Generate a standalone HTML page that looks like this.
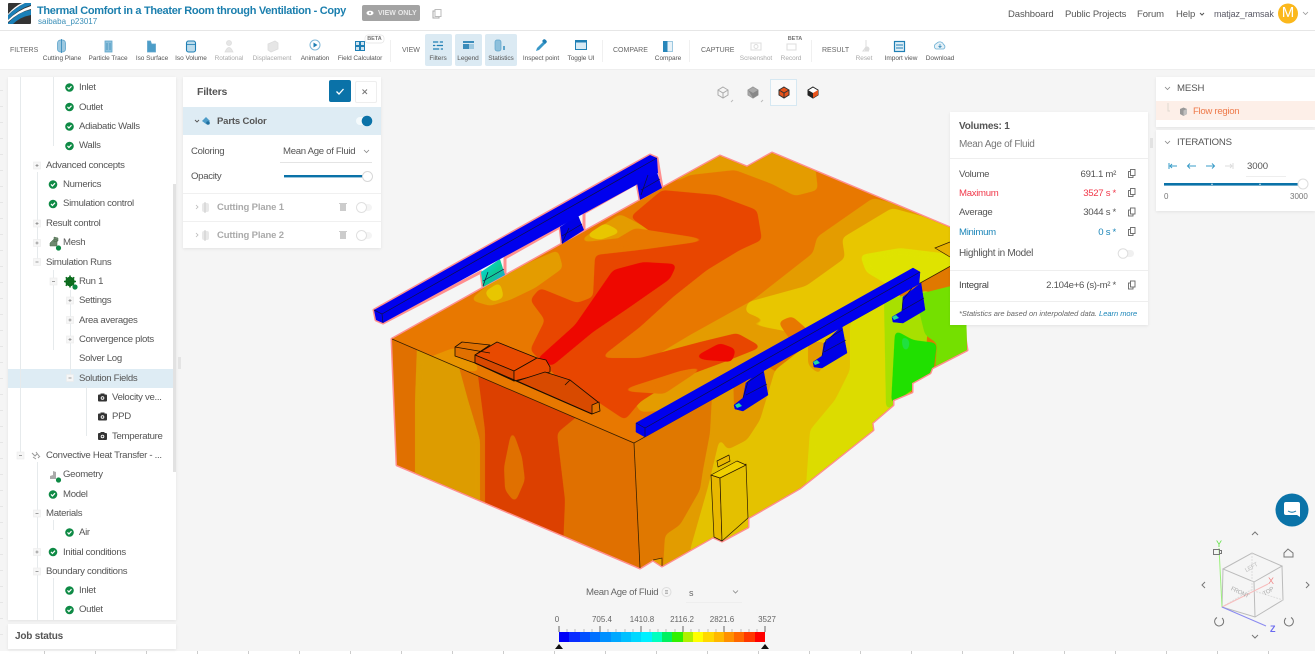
<!DOCTYPE html>
<html><head><meta charset="utf-8"><title>Thermal Comfort</title>
<style>
html,body{margin:0;padding:0;width:1315px;height:654px;overflow:hidden;background:#f5f5f5;font-family:"Liberation Sans",sans-serif;color:#555}
.a{position:absolute}
.t{position:absolute;white-space:nowrap;line-height:14px;font-size:9.6px;letter-spacing:-.3px;color:#555;margin-top:1px}
.c{transform:translateX(-50%)}
.r{transform:translateX(-100%)}
.l{font-size:6.5px;letter-spacing:-.05px;color:#555}
.g{font-size:7px;color:#666;letter-spacing:0}
.d{color:#aaa}
.p{position:absolute;background:#fff;box-shadow:0 1px 3px rgba(0,0,0,.08)}
svg{position:absolute;left:0;top:0;overflow:visible}
.f polygon{filter:url(#goo)}
</style></head><body>

<!-- 3D model -->
<svg width="1315" height="654" viewBox="0 0 1315 654">
<defs>
<filter id="goo" filterUnits="userSpaceOnUse" x="360" y="130" width="640" height="460" color-interpolation-filters="sRGB">
<feGaussianBlur stdDeviation="3"/>
<feColorMatrix type="matrix" values="1 0 0 0 0 0 1 0 0 0 0 0 1 0 0 0 0 0 12 -5.5"/>
</filter>
<clipPath id="top"><polygon points="392,339 680,178 720,156 747,167 772,153 965,234 965,258 634,443"/></clipPath>
<clipPath id="lw"><polygon points="392,339 634,443 640,568 397,465"/></clipPath>
<clipPath id="rw"><polygon points="634,443 965,258 967,350 932,368 930,373 912,383 912,392 893,400 893,405 872,423 873,430 800,488 748,518 748,527 722,541 713,537 662,566 653,560 640,568"/></clipPath>
<linearGradient id="cy" x1="0" y1="0" x2="1" y2="1"><stop offset="0" stop-color="#00d8f0"/><stop offset=".55" stop-color="#10c890"/><stop offset=".8" stop-color="#20a8d0"/><stop offset="1" stop-color="#0000e8"/></linearGradient>
</defs>
<!-- outline -->
<polygon fill="#e87800" stroke="#ff8f8f" stroke-width="3" stroke-linejoin="round" points="392,339 680,178 720,156 747,167 772,153 960,232 963,325 967,350 932,368 930,373 912,383 912,392 893,400 893,405 872,423 873,430 800,488 748,518 748,527 722,541 713,537 662,566 653,560 640,568 397,465"/>
<polygon fill="none" stroke="#ff8f8f" stroke-width="3" stroke-linejoin="round" points="374,310 650,155 657,158 662,188 640,200 637,183 584,213 584,230 562,244 560,227 505,258 505,275 483,287 481,272 383,323 376,320"/>

<!-- top face -->
<g clip-path="url(#top)"><g class="f">
<rect x="380" y="150" width="600" height="300" fill="#e87800"/>
<polygon fill="#e49c00" points="655,195 720,145 747,155 772,140 815,165 818,190 795,196 772,184 735,170 690,175"/>
<polygon fill="#e49c00" points="873,198 817,237 813,253 753,300 690,335 645,362 622,378 640,412 680,410 760,360 800,335 980,262 980,225"/>
<polygon fill="#e8c600" points="892,208 842,238 845,258 806,286 748,302 745,312 770,322 752,322 722,332 753,325 790,332 812,342 980,268 980,232"/>
<polygon fill="#dfe300" points="860,255 900,248 950,254 955,270 900,292 866,272"/>
<polygon fill="#e49c00" points="470,300 490,283 530,262 558,250 563,268 535,288 510,300 490,306"/>
<polygon fill="#e8c600" points="484,292 500,282 504,298 492,302"/>
<polygon fill="#e49c00" points="580,240 620,214 632,220 668,240 620,238 585,242"/>
<polygon fill="#e8c600" points="585,236 605,223 622,232 600,240"/>
<polygon fill="#e84600" points="530,300 540,288 577,303 593,297 595,255 640,250 665,242 630,217 662,190 717,195 757,210 762,240 740,250 707,270 673,297 640,327 600,358 640,358 700,342 737,333 762,347 727,361 673,381 640,402 625,420 595,400 560,380 530,350 545,320"/>
<polygon fill="#e87800" points="635,228 712,240 640,250 605,246"/>
<polygon fill="#e87800" points="618,391 680,371 706,366 664,394"/>
<polygon fill="#ee0800" points="536,360 575,325 613,270 643,262 677,264 670,279 627,309 593,332 552,366"/>
<polygon fill="#ee0800" points="694,357 720,343 736,349 732,362 705,360"/>
<polygon fill="#e87800" points="778,322 792,316 808,330 810,344 795,347"/>
<polygon fill="#e89400" points="417,362 453,348 470,352 480,372 440,368"/>
</g></g>

<!-- left wall -->
<g clip-path="url(#lw)"><g class="f">
<rect x="385" y="330" width="260" height="245" fill="#e07000"/>
<polygon fill="#dd9c00" points="417,345 453,345 468,400 480,440 480,520 415,490 415,400"/>
<polygon fill="#dc4000" points="476,360 585,410 557,433 565,500 563,550 485,520 485,430"/>
<polygon fill="#e07000" points="512,428 504,467 505,490 515,503 525,480 522,457"/>
</g></g>

<!-- right wall -->
<g clip-path="url(#rw)"><g class="f">
<rect x="630" y="250" width="340" height="330" fill="#e07800"/>
<polygon fill="#e29c00" points="712,395 710,433 703,470 700,490 680,525 665,535 662,585 700,585 760,440 790,380 740,350"/>
<polygon fill="#e4c200" points="775,370 760,420 747,440 727,450 720,437 708,487 690,550 700,590 820,510 880,420 860,300 820,335"/>
<polygon fill="#dcdc00" points="850,322 850,370 835,400 810,430 805,500 880,450 900,400 900,290"/>
<polygon fill="#a8e000" points="884,300 886,410 905,400 925,370 930,290"/>
<polygon fill="#20e000" points="895,330 913,340 937,343 933,375 891,405"/>
<polygon fill="#20e040" points="901,335 910,340 908,352 903,350"/>
<polygon fill="#74e000" points="915,295 975,280 975,355 935,372 937,343 925,335"/>
<polygon fill="#e07800" points="733,372 747,375 744,412 734,408"/>
<polygon fill="#e49c00" points="808,342 826,342 820,375 808,365"/>
</g></g>
<polyline fill="none" stroke="#3a2000" stroke-width=".8" points="392,339 634,443 965,258"/>
<line x1="634" y1="443" x2="640" y2="568" stroke="#3a2000" stroke-width=".8"/>
<polyline fill="#e8b000" stroke="#3a2000" stroke-width=".7" points="950,242 935,248 950,257"/>
<polyline fill="#e8a000" stroke="#3a2000" stroke-width=".7" points="653,560 662,558 662,566"/>

<!-- back beam -->
<polygon fill="#0000e6" points="640,200 637,183 657,172 662,188"/>
<polygon fill="#0000e6" points="562,244 560,227 578,215 584,230"/>
<polygon fill="url(#cy)" points="483,287 481,272 500,259 505,275"/>
<polygon fill="#0000ee" points="374,310 650,155 657,158 658,173 383,323 376,320"/>
<g fill="none" stroke="#101040" stroke-width=".7">
<polyline points="374,310 382,314 657,158"/><line x1="382" y1="314" x2="383" y2="323"/>
<polyline points="648,175 641,195"/><polyline points="641,190 660,179"/>
<polyline points="569,228 562,243"/><polyline points="562,236 582,224"/>
<polyline points="488,272 483,286"/><polyline points="483,281 504,269"/>
</g>

<!-- bench -->
<g stroke="#1a0d00" stroke-width=".8" stroke-linejoin="round">
<polygon fill="#e07000" points="455,347 462,342 490,345 475,355 475,363 455,356"/>
<polygon fill="#e84a00" points="497,342 537,358 514,371 475,355"/>
<polygon fill="#d84800" points="475,355 514,371 514,381 475,363"/>
<polygon fill="#e84a00" points="514,371 537,358 546,360 550,367 550,372 514,381"/>
<polygon fill="#d84a00" points="517,381 545,372 570,380 598,402 592,414"/>
<polygon fill="#e07000" points="592,405 599,402 600,411 592,414"/>
<line x1="475" y1="363" x2="592" y2="414" stroke-width="1.100"/>
<line x1="455" y1="347" x2="490" y2="353"/>
<line x1="570" y1="380" x2="565" y2="385"/>
</g>

<!-- front beam legs -->
<g fill="#0000e6" stroke="#0000e6" stroke-width=".5" stroke-linejoin="round">
<polygon points="903,297 921,283 925,310 903,323 893,322 892,317 902,311"/>
<polygon points="824,343 842,326 847,353 822,368 814,367 813,362 822,356"/>
<polygon points="746,383 763,368 768,395 743,411 735,409 734,405 743,398"/>
</g>
<g fill="none" stroke="#101040" stroke-width=".7">
<polyline points="912,288 903,300 902,311"/><line x1="903" y1="310" x2="924" y2="298"/>
<polyline points="842,330 826,340 822,356"/><line x1="824" y1="352" x2="846" y2="340"/>
<polyline points="763,372 748,382 743,398"/><line x1="746" y1="395" x2="767" y2="384"/>
</g>
<polygon fill="#20d8a0" points="892,317 896,315 899,318 894,320"/>
<polygon fill="#20d8a0" points="813,362 817,360 820,363 815,365"/>
<polygon fill="#20d8a0" points="735,405 739,403 742,406 737,408"/>
<!-- front beam -->
<polygon fill="#0000ee" stroke="#0000ee" stroke-width=".5" stroke-linejoin="round" points="636,423 913,268 920,272 919,284 645,437 636,432"/>
<g fill="none" stroke="#101040" stroke-width=".7"><polyline points="636,423 645,428 920,272"/><line x1="645" y1="428" x2="645" y2="437"/></g>

<!-- cabinet -->
<g stroke="#2a1800" stroke-width=".7" stroke-linejoin="round">
<polygon fill="#e8b800" points="711,475 720,478 722,541 714,537"/>
<polygon fill="#e4c000" points="720,478 746,464 748,518 722,541"/>
<polygon fill="#f0d000" points="711,475 737,461 746,465 720,478"/>
<polygon fill="#e8b800" points="717,461 729,455 730,461 718,467"/>
</g>

<!-- colour bar -->
<g shape-rendering="crispEdges">
<rect x="559" y="632" width="11" height="10" fill="#0000f8"/><rect x="569" y="632" width="11" height="10" fill="#0a2cff"/><rect x="580" y="632" width="11" height="10" fill="#0050ff"/><rect x="590" y="632" width="11" height="10" fill="#0070ff"/><rect x="600" y="632" width="11" height="10" fill="#0090ff"/><rect x="611" y="632" width="11" height="10" fill="#00a8ff"/><rect x="621" y="632" width="11" height="10" fill="#00c0ff"/><rect x="631" y="632" width="11" height="10" fill="#00d8ff"/><rect x="641" y="632" width="11" height="10" fill="#00f0ff"/><rect x="652" y="632" width="11" height="10" fill="#00ffc0"/><rect x="662" y="632" width="11" height="10" fill="#00f060"/><rect x="672" y="632" width="11" height="10" fill="#30f000"/><rect x="683" y="632" width="11" height="10" fill="#b0f000"/><rect x="693" y="632" width="11" height="10" fill="#ffff00"/><rect x="703" y="632" width="11" height="10" fill="#ffd800"/><rect x="714" y="632" width="11" height="10" fill="#ffb800"/><rect x="724" y="632" width="11" height="10" fill="#ff9000"/><rect x="734" y="632" width="11" height="10" fill="#ff6800"/><rect x="744" y="632" width="11" height="10" fill="#ff3800"/><rect x="755" y="632" width="10" height="10" fill="#ff0000"/>
</g>
<path d="M559 626v6M600 626v6M641 626v6M683 626v6M724 626v6M765 626v6" stroke="#444" stroke-width=".8"/>
<path d="M567 629v3M575 629v3M584 629v3M592 629v3M608 629v3M616 629v3M625 629v3M633 629v3M650 629v3M658 629v3M666 629v3M675 629v3M691 629v3M699 629v3M708 629v3M716 629v3M732 629v3M741 629v3M749 629v3M757 629v3" stroke="#999" stroke-width=".6"/>
<polygon points="555,649 559,644 563,649" fill="#111"/><polygon points="761,649 765,644 769,649" fill="#111"/>

<!-- view cubes -->
<rect x="770.500" y="79.500" width="26" height="26" fill="#fafafa" stroke="#d6e8f2"/>
<g stroke-width="1">
<path d="M723 87l5 3v5l-5 3-5-3v-5zM718 90l5 3 5-3M723 93v5" fill="none" stroke="#aaa"/>
<path d="M753 87l5 3v5l-5 3-5-3v-5z" fill="#aaa" stroke="#999"/><path d="M748 90l5 3 5-3v5l-5 3z" fill="#888"/>
<path d="M784 87l5 3v5l-5 3-5-3v-5z" fill="#e8541c" stroke="#333"/><path d="M779 90l5 3 5-3M784 93v5" fill="none" stroke="#333"/>
<path d="M813 87l5 3v5l-5 3-5-3v-5z" fill="#fff" stroke="#222"/><path d="M808 90l5 3v5l-5-3z" fill="#222"/><path d="M813 93l5-3v5l-5 3z" fill="#e8541c"/>
<path d="M733 100l-2 2M763 100l-2 2" stroke="#bbb"/>
</g>

<!-- nav cube -->
<g fill="none" stroke="#bbb" stroke-width="1">
<path d="M1223 569l29-16 30 13-28 16zM1223 569l-1 38 33 10 28-17-1-34M1254 582l1 35"/>
<path d="M1222 607l29-17 32 10M1252 553v37" stroke="#ddd" stroke-dasharray="2 1"/>
</g>
<line x1="1222" y1="607" x2="1219" y2="548" stroke="#9cf07c" stroke-width="1"/>
<line x1="1222" y1="607" x2="1268" y2="584" stroke="#f6bcbc" stroke-width="1"/>
<line x1="1222" y1="607" x2="1266" y2="626" stroke="#8a8af0" stroke-width="1"/>
<g fill="none" stroke="#777" stroke-width="1">
<path d="M1252 535l3-3 3 3M1252 635l3 3 3-3M1205 582l-3 3 3 3M1306 582l3 3-3 3"/>
<path d="M1284 553l4-4 5 4v4h-9z"/>
<rect x="1213.500" y="549.500" width="6" height="5"/><rect x="1219.500" y="550.500" width="2" height="3"/>
<path d="M1222 618a4.500 4.500 0 1 1-5-.5M1286 618a4.500 4.500 0 1 0 5-.5"/>
</g>

<!-- chat -->
<circle cx="1292" cy="510" r="16.500" fill="#0a73a8"/>
<path d="M1286 502h12a2 2 0 0 1 2 2v13l-3-2h-11a2 2 0 0 1-2-2v-9a2 2 0 0 1 2-2z" fill="#fff"/>
<path d="M1288 511q4 2.500 8 0" fill="none" stroke="#0a73a8" stroke-width="1"/>
</svg>

<div class="t" style="left:1216px;top:536px;color:#5ee040;font-size:9px">Y</div>
<div class="t" style="left:1268px;top:573px;color:#f08a8a;font-size:9px">X</div>
<div class="t" style="left:1270px;top:621px;color:#6a6af0;font-size:9px;font-weight:bold">Z</div>
<div class="t" style="left:1230px;top:585px;color:#aaa;font-size:6px;transform:rotate(25deg)">FRONT</div>
<div class="t" style="left:1263px;top:584px;color:#aaa;font-size:6px;transform:rotate(-30deg)">TOP</div>
<div class="t" style="left:1245px;top:560px;color:#bbb;font-size:6px;transform:rotate(-30deg)">LEFT</div>

<!-- rulers -->
<svg width="1315" height="654" viewBox="0 0 1315 654">
<rect x="0" y="651" width="1315" height="3" fill="#fff"/>
<path d="M44.500 651v3M95.500 651v3M146.500 651v3M197.500 651v3M248.500 651v3M299.500 651v3M350.500 651v3M401.500 651v3M452.500 651v3M503.500 651v3M554.500 651v3M605.500 651v3M656.500 651v3M707.500 651v3M758.500 651v3M809.500 651v3M860.500 651v3M911.500 651v3M962.500 651v3M1013.500 651v3M1064.500 651v3M1115.500 651v3M1166.500 651v3M1217.500 651v3M1268.500 651v3" stroke="#ccc"/>
<path d="M0 90.500h3M0 106.500h3M0 122.500h3M0 138.500h3M0 154.500h3M0 170.500h3M0 186.500h3M0 202.500h3M0 218.500h3M0 234.500h3M0 250.500h3M0 266.500h3M0 282.500h3M0 298.500h3M0 314.500h3M0 330.500h3M0 346.500h3M0 362.500h3M0 378.500h3M0 394.500h3M0 410.500h3M0 426.500h3M0 442.500h3M0 458.500h3M0 474.500h3M0 490.500h3M0 506.500h3M0 522.500h3M0 538.500h3M0 554.500h3M0 570.500h3M0 586.500h3M0 602.500h3M0 618.500h3M0 634.500h3" stroke="#e6e6e6"/>
</svg>

<!-- Header -->
<div class="a" style="left:0;top:0;width:1315px;height:30px;background:#fff;border-bottom:1px solid #e6e6e6"></div>
<svg width="40" height="30" viewBox="0 0 40 30">
<rect x="8" y="3" width="23" height="21" rx="1" fill="#333"/>
<path d="M8 15Q18 6 25 3h6v2Q18 9 8 20z" fill="#1a80b8"/>
<path d="M8 23Q20 11 31 10v5Q20 17 13 24H8z" fill="#1a80b8"/>
<path d="M8 14Q15 6 22 3h3Q16 7 8 15zM8 20Q18 10 31 6v3Q19 12 8 22z" fill="#fff"/>
</svg>
<div class="t" style="left:37px;top:3px;font-size:11px;font-weight:bold;color:#1b7fae;letter-spacing:-.32px">Thermal Comfort in a Theater Room through Ventilation - Copy</div>
<div class="t" style="left:38px;top:14px;font-size:8px;color:#3a8fb8;letter-spacing:0">saibaba_p23017</div>
<div class="a" style="left:362px;top:5px;width:58px;height:16px;background:#a3a3a3;border-radius:2px"></div>
<svg width="430" height="30" viewBox="0 0 430 30"><ellipse cx="370" cy="13" rx="3.500" ry="2.300" fill="#fff"/><circle cx="370" cy="13" r="1" fill="#a3a3a3"/>
<rect x="433" y="11" width="6" height="7" fill="none" stroke="#aaa"/><rect x="435" y="9.500" width="6" height="7" fill="#fff" stroke="#bbb"/></svg>
<div class="t" style="left:378px;top:6px;font-size:7px;font-weight:bold;color:#e8e8e8;letter-spacing:0">VIEW ONLY</div>
<div class="t" style="left:1008px;top:7px;font-size:9.500px;letter-spacing:-.1px">Dashboard</div>
<div class="t" style="left:1065px;top:7px;font-size:9.500px;letter-spacing:-.1px">Public Projects</div>
<div class="t" style="left:1137px;top:7px;font-size:9.500px;letter-spacing:-.1px">Forum</div>
<div class="t" style="left:1176px;top:7px;font-size:9.500px;letter-spacing:-.1px">Help</div>
<div class="t" style="left:1214px;top:6px;font-size:9px;letter-spacing:-.1px;color:#5a5a66">matjaz_ramsak</div>
<svg width="1315" height="30" viewBox="0 0 1315 30">
<path d="M1200 13l2 2 2-2" fill="none" stroke="#555" stroke-width="1"/>
<circle cx="1288" cy="13.500" r="10" fill="#fbb81c"/>
<path d="M1303 12l2.500 2.500 2.500-2.500" fill="none" stroke="#999" stroke-width=".8"/>
</svg>
<div class="t" style="left:1288px;top:5px;font-size:15px;color:#fff;letter-spacing:0;transform:translateX(-50%)">M</div>

<!-- Toolbar -->
<div class="a" style="left:0;top:31px;width:1315px;height:38px;background:#fff;border-bottom:1px solid #eee"></div>
<div class="a" style="left:425px;top:34px;width:27px;height:32px;background:#dbeaf3;border-radius:2px"></div>
<div class="a" style="left:455px;top:34px;width:27px;height:32px;background:#dbeaf3;border-radius:2px"></div>
<div class="a" style="left:485px;top:34px;width:32px;height:32px;background:#dbeaf3;border-radius:2px"></div>
<svg width="1315" height="70" viewBox="0 0 1315 70">
<path d="M390.500 40v22M602.500 40v22M689.500 40v22M811.500 40v22" stroke="#f0f0f0"/>
<g fill="#9cc8e0" stroke="#5fa5cb" stroke-width=".8">
<rect x="57.500" y="40" width="8" height="12" rx="3"/><path d="M61.500 39v14" stroke="#2e86b8"/>
<rect x="105" y="41" width="7" height="11" fill="#8dc0dc"/><path d="M107 43v7M110 43v7" stroke="#3a8cba"/>
<path d="M147.500 41h3l1 3h4v8h-8z" fill="#4c9dc8"/>
<rect x="186.500" y="41" width="9" height="11" rx="2" fill="#bcdcec" stroke="#1f7fb4" stroke-width="1.100"/><path d="M186.500 44.500h9" stroke="#1f7fb4"/>
</g>
<g fill="#e6e6e6" stroke="#ddd" stroke-width=".8"><path d="M225 52q4-9 8 0z"/><circle cx="229" cy="43" r="2.500"/><path d="M268 44l7-3 3 2v6l-7 3-3-2z"/></g>
<circle cx="315" cy="45" r="5" fill="#fff" stroke="#7fb8d8"/><path d="M313.500 42.500l4 2.500-4 2.500z" fill="#1f7fb4"/>
<g fill="#cfe4f0" stroke="#1f7fb4" stroke-width="1"><rect x="355.500" y="41.500" width="4" height="4"/><rect x="360.500" y="41.500" width="4" height="4"/><rect x="355.500" y="46.500" width="4" height="4"/><rect x="360.500" y="46.500" width="4" height="4"/></g>
<rect x="365" y="35" width="19" height="8" rx="3" fill="#fff" stroke="#e4e4e4" stroke-width=".7"/>
<g stroke="#1f7fb4" stroke-width="1.200" fill="none"><path d="M433 42h10M433 45.500h10M433 49h10"/></g>
<g stroke="#fff" stroke-width="1.200"><path d="M439 41v2M436 44.500v2M440 48v2"/></g>
<path d="M463 41h11v2h-11z" fill="#3a8cba"/><rect x="463" y="44" width="11" height="5" fill="#3a8cba"/><rect x="469" y="44" width="5" height="5" fill="#9cc8e0"/>
<rect x="495" y="40" width="6" height="11" rx="2" fill="#8dc0dc" stroke="#5fa5cb" stroke-width=".7"/><path d="M503 46h2v4h-2z" fill="#5fa5cb"/>
<path d="M536 51l1-3 7-7 2 2-7 7z" fill="#3a98c8"/><path d="M542 41l2-2 2 1 1 2-2 2z" fill="#1f7fb4"/>
<rect x="575.500" y="40.500" width="11" height="9" fill="#d8eaf4" stroke="#1f7fb4"/><rect x="575" y="40" width="12" height="2.500" fill="#1f7fb4"/>
<rect x="663.500" y="41.500" width="9" height="10" fill="#e8f2f8" stroke="#9cc8e0"/><rect x="663" y="41" width="4.500" height="11" fill="#2886ba"/>
<g fill="none" stroke="#ddd"><rect x="751" y="43" width="10" height="7"/><circle cx="756" cy="46.500" r="2"/><rect x="787" y="44" width="9" height="6"/><path d="M866 40v7l-3 4h6"/></g>
<circle cx="867" cy="49" r="2.500" fill="#ddd"/>
<rect x="894.500" y="41.500" width="10" height="10" fill="#e0eff7" stroke="#1f7fb4" stroke-width="1.200"/><path d="M896 45h7M896 48h7" stroke="#1f7fb4"/>
<path d="M936 49a3 3 0 0 1 .5-5.500 4 4 0 0 1 7 1 2.500 2.500 0 0 1 0 4.500z" fill="#e6f1f7" stroke="#6cb0d4" stroke-width=".8"/><path d="M940 44v3M938.500 46l1.500 1.500 1.500-1.500" fill="none" stroke="#1f7fb4" stroke-width=".7"/>
</svg>
<div class="t g" style="left:10px;top:43px">FILTERS</div>
<div class="t g" style="left:402px;top:43px">VIEW</div>
<div class="t g" style="left:613px;top:43px">COMPARE</div>
<div class="t g" style="left:701px;top:43px">CAPTURE</div>
<div class="t g" style="left:822px;top:43px">RESULT</div>
<div class="t l c" style="left:62px;top:51px">Cutting Plane</div>
<div class="t l c" style="left:108px;top:51px">Particle Trace</div>
<div class="t l c" style="left:152px;top:51px">Iso Surface</div>
<div class="t l c" style="left:191px;top:51px">Iso Volume</div>
<div class="t l c d" style="left:229px;top:51px">Rotational</div>
<div class="t l c d" style="left:272px;top:51px">Displacement</div>
<div class="t l c" style="left:315px;top:51px">Animation</div>
<div class="t l c" style="left:360px;top:51px">Field Calculator</div>
<div class="t c" style="left:374.500px;top:31px;font-size:5.500px;font-weight:bold;color:#777;letter-spacing:0">BETA</div>
<div class="t l c" style="left:438px;top:51px">Filters</div>
<div class="t l c" style="left:468px;top:51px">Legend</div>
<div class="t l c" style="left:501px;top:51px">Statistics</div>
<div class="t l c" style="left:541px;top:51px">Inspect point</div>
<div class="t l c" style="left:581px;top:51px">Toggle UI</div>
<div class="t l c" style="left:668px;top:51px">Compare</div>
<div class="t l c d" style="left:756px;top:51px">Screenshot</div>
<div class="t l c d" style="left:791px;top:51px">Record</div>
<div class="t c" style="left:795px;top:31px;font-size:5.500px;font-weight:bold;color:#777;letter-spacing:0">BETA</div>
<div class="t l c d" style="left:864px;top:51px">Reset</div>
<div class="t l c" style="left:901px;top:51px">Import view</div>
<div class="t l c" style="left:940px;top:51px">Download</div>

<!-- Tree panel -->
<div class="p" style="left:8px;top:77px;width:168px;height:543px"></div>
<div class="a" style="left:8px;top:369px;width:165px;height:19px;background:#deecf4"></div>
<div class="a" style="left:173px;top:184px;width:3px;height:288px;background:#e2e2e2"></div>
<div class="a" style="left:178px;top:357px;width:3px;height:12px;background:#e4e4e4"></div>
<svg width="200" height="654" viewBox="0 0 200 654">
<defs><g id="ck"><circle r="4.300" fill="#0e8a45"/><path d="M-2-.1L-.6 1.500 2-1.300" fill="none" stroke="#fff" stroke-width="1.200"/></g>
<g id="mi"><rect x="-3.500" y="-3.500" width="7" height="7" fill="#f6f6f6" stroke="#ececec" stroke-width=".6"/><path d="M-1.500 0h3" stroke="#888" stroke-width=".8"/></g>
<g id="pl"><rect x="-3.500" y="-3.500" width="7" height="7" fill="#f6f6f6" stroke="#ececec" stroke-width=".6"/><path d="M-1.500 0h3M0-1.500v3" stroke="#888" stroke-width=".8"/></g>
<g id="cam"><rect x="-4.500" y="-3" width="9" height="7" rx="1" fill="#333"/><rect x="-2" y="-4" width="4" height="2" fill="#333"/><circle cy=".5" r="1.800" fill="#fff"/><circle cy=".5" r=".9" fill="#333"/></g></defs>
<path d="M20.500 77V452M37.500 172V262M37.500 462V620M53.500 77V146M53.500 270V350M70.500 290V378M86.500 386V436M53.500 520V530M53.500 578V620" stroke="#e6eaec" stroke-width="1" fill="none"/>
<use href="#ck" x="69.500" y="87.500"/><use href="#ck" x="69.500" y="107"/><use href="#ck" x="69.500" y="126.500"/><use href="#ck" x="69.500" y="146"/>
<use href="#pl" x="37" y="165.500"/><use href="#ck" x="53" y="184.500"/><use href="#ck" x="53" y="204"/>
<use href="#pl" x="37" y="223.500"/><use href="#pl" x="37" y="243"/><use href="#mi" x="37" y="262"/>
<use href="#mi" x="53.500" y="281.500"/><use href="#pl" x="70" y="300.500"/><use href="#pl" x="70" y="320"/><use href="#pl" x="70" y="339.500"/><use href="#mi" x="70" y="378"/>
<use href="#cam" x="102.500" y="397.500"/><use href="#cam" x="102.500" y="416.500"/><use href="#cam" x="102.500" y="436"/>
<use href="#mi" x="20.500" y="455.500"/>
<use href="#ck" x="53" y="494.500"/><use href="#mi" x="37" y="513.500"/><use href="#ck" x="69.500" y="532.500"/><use href="#pl" x="37" y="552"/><use href="#ck" x="53" y="552"/><use href="#mi" x="37" y="571.500"/><use href="#ck" x="69.500" y="590.500"/><use href="#ck" x="69.500" y="610"/>
<!-- mesh icon -->
<path d="M50 243l4-4 3 1v6h-7zM54 237l4 1v3l-4 1z" fill="#6f8a70" stroke="#4a6a4a" stroke-width=".5"/><circle cx="58.500" cy="248" r="2.600" fill="#0e8a45"/>
<!-- gear -->
<circle cx="70" cy="281.500" r="3.500" fill="none" stroke="#0b6b1d" stroke-width="2.400"/><path d="M70 275.500v12M64 281.500h12M65.800 277.300l8.400 8.400M74.200 277.300l-8.400 8.400" stroke="#0b6b1d" stroke-width="1.600"/><circle cx="75" cy="287" r="2.600" fill="#0e8a45"/>
<!-- convective -->
<path d="M32 453l3 3 2-2M36 452l3 4M33 457l3 2M38 458l2-2" stroke="#999" stroke-width="1" fill="none"/>
<!-- geometry -->
<path d="M50 476l3-1v4h-3zM53 471l3 1v7h-3z" fill="#aaa"/><circle cx="58.500" cy="480" r="2.600" fill="#0e8a45"/>
</svg>
<div class="t" style="left:79px;top:80px">Inlet</div>
<div class="t" style="left:79px;top:100px">Outlet</div>
<div class="t" style="left:79px;top:119px">Adiabatic Walls</div>
<div class="t" style="left:79px;top:138px">Walls</div>
<div class="t" style="left:46px;top:158px">Advanced concepts</div>
<div class="t" style="left:63px;top:177px">Numerics</div>
<div class="t" style="left:63px;top:196px">Simulation control</div>
<div class="t" style="left:46px;top:216px">Result control</div>
<div class="t" style="left:63px;top:235px">Mesh</div>
<div class="t" style="left:46px;top:255px">Simulation Runs</div>
<div class="t" style="left:79px;top:274px">Run 1</div>
<div class="t" style="left:79px;top:293px">Settings</div>
<div class="t" style="left:79px;top:313px">Area averages</div>
<div class="t" style="left:79px;top:332px">Convergence plots</div>
<div class="t" style="left:79px;top:351px">Solver Log</div>
<div class="t" style="left:79px;top:371px">Solution Fields</div>
<div class="t" style="left:112px;top:390px">Velocity ve...</div>
<div class="t" style="left:112px;top:409px">PPD</div>
<div class="t" style="left:112px;top:429px">Temperature</div>
<div class="t" style="left:46px;top:448px">Convective Heat Transfer - ...</div>
<div class="t" style="left:63px;top:467px">Geometry</div>
<div class="t" style="left:63px;top:487px">Model</div>
<div class="t" style="left:46px;top:506px">Materials</div>
<div class="t" style="left:79px;top:525px">Air</div>
<div class="t" style="left:63px;top:545px">Initial conditions</div>
<div class="t" style="left:46px;top:564px">Boundary conditions</div>
<div class="t" style="left:79px;top:583px">Inlet</div>
<div class="t" style="left:79px;top:602px">Outlet</div>
<div class="p" style="left:8px;top:624px;width:168px;height:25px"></div>
<div class="t" style="left:15px;top:629px;font-size:10px;font-weight:bold;color:#555;letter-spacing:-.2px">Job status</div>

<!-- Filters panel -->
<div class="p" style="left:183px;top:77px;width:198px;height:171px"></div>
<div class="a" style="left:183px;top:107px;width:198px;height:28px;background:#deecf4"></div>
<div class="a" style="left:329px;top:80px;width:22px;height:22px;background:#0a72a8;border-radius:2px"></div>
<div class="a" style="left:355px;top:81px;width:20px;height:20px;background:#fff;border:1px solid #eee;border-radius:2px"></div>
<div class="a" style="left:280px;top:162px;width:92px;height:1px;background:#e4e4e4"></div>
<div class="a" style="left:183px;top:193px;width:198px;height:1px;background:#f0f0f0"></div>
<div class="a" style="left:183px;top:221px;width:198px;height:1px;background:#f0f0f0"></div>
<svg width="400" height="260" viewBox="0 0 400 260">
<path d="M336.500 91.500l2.500 2.500 4.500-5" fill="none" stroke="#fff" stroke-width="1.300"/>
<path d="M362.500 89.500l4.500 4.500M367 89.500l-4.500 4.500" stroke="#777" stroke-width="1"/>
<path d="M195 120l2 2 2-2" fill="none" stroke="#555" stroke-width=".9"/>
<path d="M202 121l4-4 4 4-4 3z" fill="#4d9cc8"/><circle cx="208" cy="123" r="1.800" fill="#1f6f9f"/>
<rect x="356" y="117" width="15" height="8" rx="4" fill="#f4fafc"/><circle cx="367" cy="121" r="5.300" fill="#0a72a8"/>
<path d="M364 150l2.500 2.500 2.500-2.500" fill="none" stroke="#888" stroke-width=".8"/>
<rect x="284" y="175" width="80" height="2.400" fill="#0a72a8"/><circle cx="367.500" cy="176.500" r="5" fill="#fff" stroke="#d8d8d8"/>
<path d="M196 205l2 2-2 2M196 233l2 2-2 2" fill="none" stroke="#bbb" stroke-width=".8"/>
<rect x="202" y="203" width="7" height="9" rx="2" fill="#e8e8e8"/><path d="M205 202v11" stroke="#ccc"/><rect x="202" y="231" width="7" height="9" rx="2" fill="#e8e8e8"/><path d="M205 230v11" stroke="#ccc"/>
<g fill="#ccc"><rect x="340" y="204" width="6" height="7"/><rect x="339" y="203" width="8" height="1"/><rect x="340" y="232" width="6" height="7"/><rect x="339" y="231" width="8" height="1"/></g>
<rect x="358" y="204" width="14" height="7" rx="3.500" fill="#f4f4f4"/><circle cx="361.500" cy="207.500" r="5" fill="#fff" stroke="#e0e0e0"/>
<rect x="358" y="232" width="14" height="7" rx="3.500" fill="#f4f4f4"/><circle cx="361.500" cy="235.500" r="5" fill="#fff" stroke="#e0e0e0"/>
</svg>
<div class="t" style="left:197px;top:84px;font-size:10.500px;font-weight:bold;letter-spacing:-.2px">Filters</div>
<div class="t" style="left:217px;top:114px;font-size:9.500px;font-weight:bold;letter-spacing:-.15px">Parts Color</div>
<div class="t" style="left:191px;top:144px">Coloring</div>
<div class="t" style="left:283px;top:144px">Mean Age of Fluid</div>
<div class="t" style="left:191px;top:169px">Opacity</div>
<div class="t" style="left:217px;top:200px;font-size:9.500px;font-weight:bold;letter-spacing:-.15px;color:#aaa">Cutting Plane 1</div>
<div class="t" style="left:217px;top:228px;font-size:9.500px;font-weight:bold;letter-spacing:-.15px;color:#aaa">Cutting Plane 2</div>

<!-- Statistics panel -->
<div class="p" style="left:950px;top:112px;width:198px;height:213px"></div>
<div class="a" style="left:950px;top:158px;width:198px;height:1px;background:#eee"></div>
<div class="a" style="left:950px;top:270px;width:198px;height:1px;background:#eee"></div>
<div class="a" style="left:950px;top:301px;width:198px;height:1px;background:#eee"></div>
<div class="a" style="left:1150px;top:138px;width:3px;height:10px;background:#e2e2e2"></div>
<div class="t" style="left:959px;top:119px;font-size:10px;font-weight:bold;letter-spacing:-.2px">Volumes: 1</div>
<div class="t" style="left:959px;top:137px;color:#777;font-size:10px">Mean Age of Fluid</div>
<div class="t" style="left:959px;top:167px">Volume</div>
<div class="t" style="left:959px;top:186px;color:#f0384a">Maximum</div>
<div class="t" style="left:959px;top:205px">Average</div>
<div class="t" style="left:959px;top:225px;color:#1a85b8">Minimum</div>
<div class="t" style="left:959px;top:246px;font-size:10px">Highlight in Model</div>
<div class="t" style="left:959px;top:278px;color:#444">Integral</div>
<div class="t r" style="left:1116px;top:167px">691.1 m²</div>
<div class="t r" style="left:1116px;top:186px;color:#f0384a">3527 s *</div>
<div class="t r" style="left:1116px;top:205px">3044 s *</div>
<div class="t r" style="left:1116px;top:225px;color:#1a85b8">0 s *</div>
<div class="t r" style="left:1116px;top:278px">2.104e+6 (s)-m² *</div>
<div class="t" style="left:959px;top:306px;font-size:7.500px;font-style:italic;color:#666;letter-spacing:-.02px">*Statistics are based on interpolated data. <span style="color:#1a85b8">Learn more</span></div>
<svg width="1315" height="330" viewBox="0 0 1315 330">
<g fill="#fff" stroke="#666" stroke-width=".9">
<rect x="1128.500" y="171.500" width="4.500" height="6"/><rect x="1130.500" y="169.500" width="4.500" height="6"/>
<rect x="1128.500" y="190.500" width="4.500" height="6"/><rect x="1130.500" y="188.500" width="4.500" height="6"/>
<rect x="1128.500" y="210" width="4.500" height="6"/><rect x="1130.500" y="208" width="4.500" height="6"/>
<rect x="1128.500" y="229.500" width="4.500" height="6"/><rect x="1130.500" y="227.500" width="4.500" height="6"/>
<rect x="1128.500" y="283" width="4.500" height="6"/><rect x="1130.500" y="281" width="4.500" height="6"/>
</g>
<rect x="1119" y="250" width="15" height="7" rx="3.500" fill="#f0f0f0"/><circle cx="1123" cy="253.500" r="4.800" fill="#fff" stroke="#ddd"/>
</svg>

<!-- Right panels -->
<div class="p" style="left:1156px;top:77px;width:159px;height:50px"></div>
<div class="a" style="left:1156px;top:101px;width:159px;height:19px;background:#fdefe8"></div>
<div class="p" style="left:1156px;top:130px;width:159px;height:81px"></div>
<div class="a" style="left:1246px;top:176px;width:40px;height:1px;background:#eee"></div>
<svg width="1315" height="220" viewBox="0 0 1315 220">
<path d="M1165 87l2.500 2.500 2.500-2.500M1165 141l2.500 2.500 2.500-2.500" fill="none" stroke="#888" stroke-width=".8"/>
<path d="M1168 103v8h2" fill="none" stroke="#e0d8d0"/>
<path d="M1180 109l3.500-1.500 3.500 1.500v5l-3.500 2-3.500-2z" fill="#999"/><path d="M1183.500 110.500l3.500-1.500v5l-3.500 2z" fill="#c0c0c0"/>
<g fill="none" stroke="#3a9cc8" stroke-width="1"><path d="M1169 163v6M1170 166h7M1172 164l-2 2 2 2"/><path d="M1188 166h8M1190 163.500l-2.500 2.500 2.500 2.500"/><path d="M1206 166h8M1212 163.500l2.500 2.500-2.500 2.500"/></g>
<g fill="none" stroke="#ddd" stroke-width="1"><path d="M1233 163v6M1225 166h7M1230 164l2 2-2 2"/></g>
<rect x="1164" y="183" width="136" height="2.600" fill="#0a72a8"/>
<circle cx="1212" cy="184.300" r=".7" fill="#fff"/><circle cx="1260" cy="184.300" r=".7" fill="#fff"/>
<circle cx="1303" cy="184" r="5" fill="#fff" stroke="#ddd"/>
</svg>
<div class="t" style="left:1177px;top:81px;letter-spacing:-.1px">MESH</div>
<div class="t" style="left:1193px;top:104px;color:#ee7a4a">Flow region</div>
<div class="t" style="left:1177px;top:135px;letter-spacing:-.2px">ITERATIONS</div>
<div class="t" style="left:1247px;top:159px;letter-spacing:-.1px">3000</div>
<div class="t" style="left:1164px;top:189px;font-size:8px;color:#777;letter-spacing:0">0</div>
<div class="t" style="left:1290px;top:189px;font-size:8px;color:#777;letter-spacing:0">3000</div>

<!-- Legend text -->
<svg width="1315" height="654" viewBox="0 0 1315 654">
<circle cx="666.500" cy="592" r="4.500" fill="#f5f5f5" stroke="#ddd"/><path d="M665 590.500h3M665 592h3M665 593.500h3" stroke="#777" stroke-width=".6"/>
<path d="M733 590.500l2.500 2.500 2.500-2.500" fill="none" stroke="#888" stroke-width=".8"/>
<path d="M686 602.500h56" stroke="#eee"/>
</svg>
<div class="t" style="left:586px;top:585px;color:#666">Mean Age of Fluid</div>
<div class="t" style="left:689px;top:585px;font-size:9px;color:#666">s</div>
<div class="t c" style="left:557px;top:612px;font-size:8px;color:#666;letter-spacing:0">0</div>
<div class="t c" style="left:602px;top:612px;font-size:8px;color:#666;letter-spacing:0">705.4</div>
<div class="t c" style="left:642px;top:612px;font-size:8px;color:#666;letter-spacing:0">1410.8</div>
<div class="t c" style="left:682px;top:612px;font-size:8px;color:#666;letter-spacing:0">2116.2</div>
<div class="t c" style="left:722px;top:612px;font-size:8px;color:#666;letter-spacing:0">2821.6</div>
<div class="t c" style="left:767px;top:612px;font-size:8px;color:#666;letter-spacing:0">3527</div>
</body></html>
